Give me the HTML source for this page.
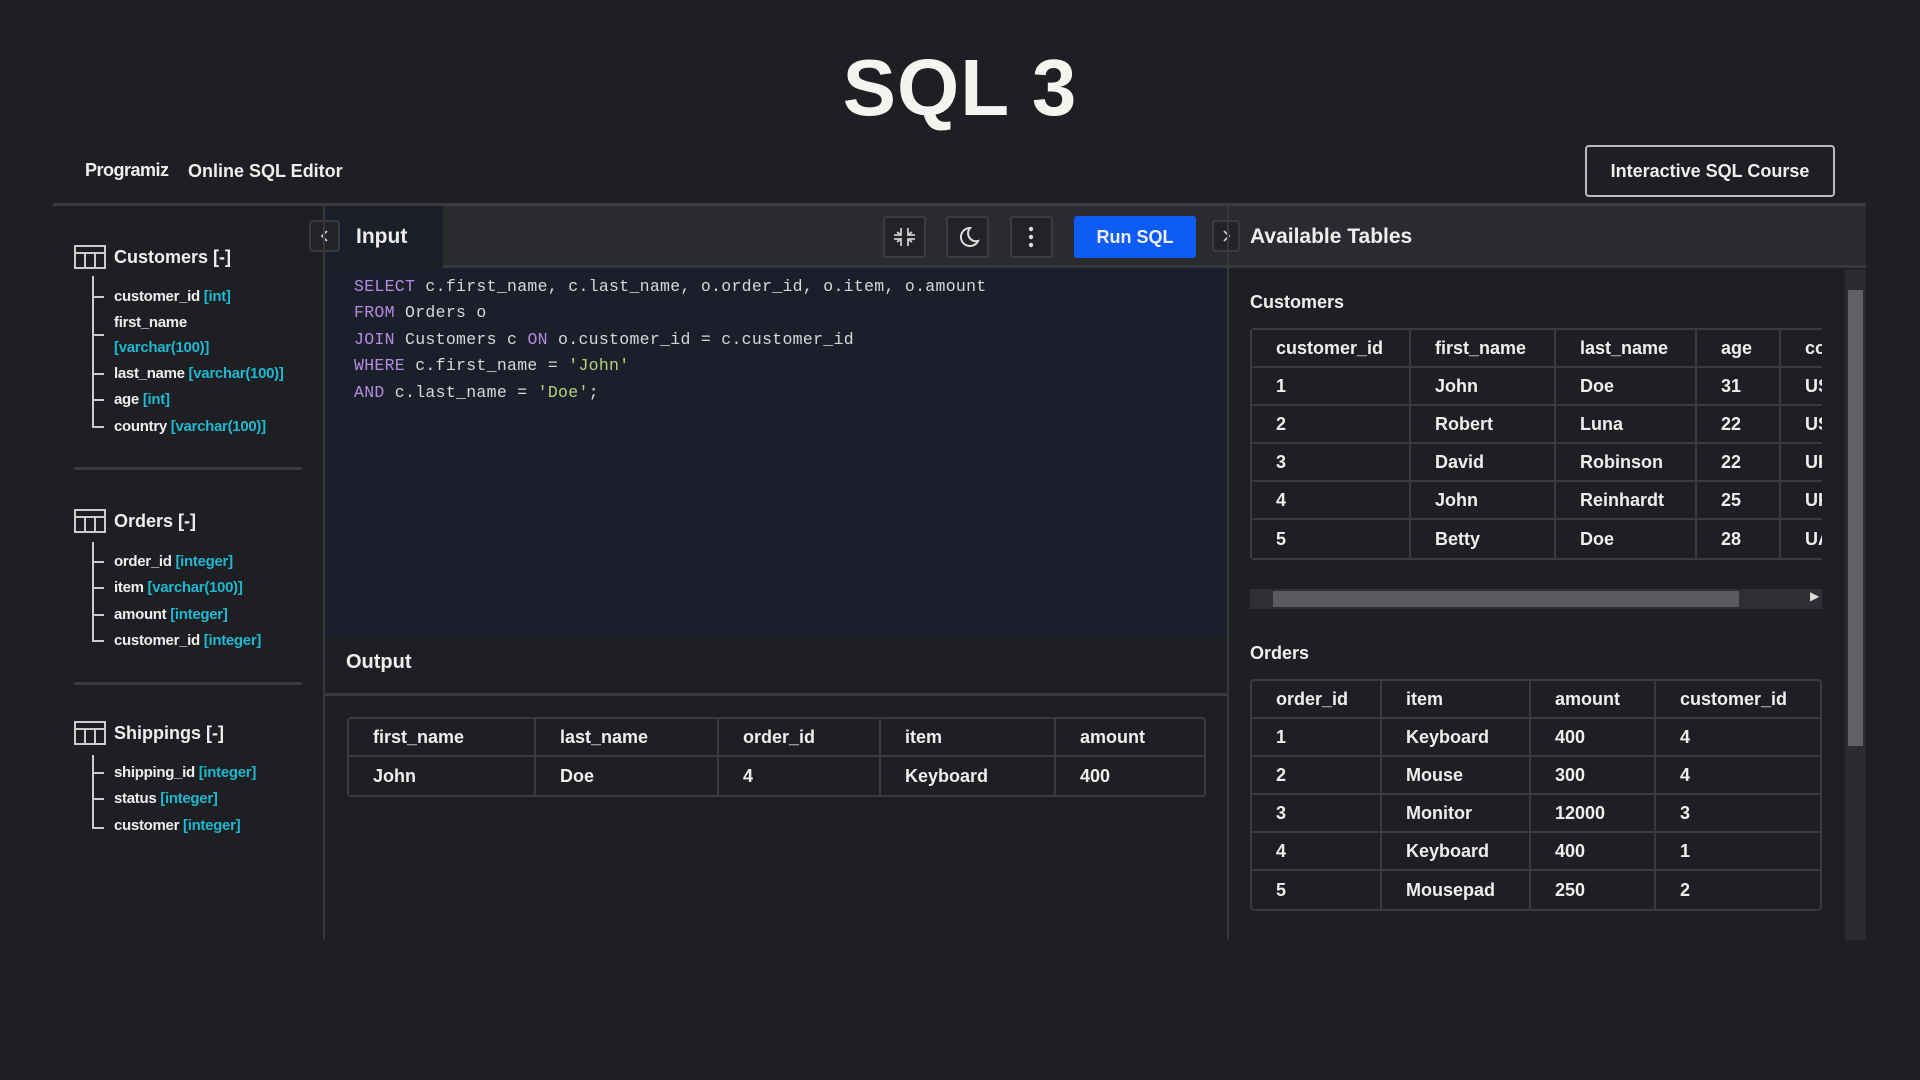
<!DOCTYPE html>
<html><head><meta charset="utf-8"><style>
*{box-sizing:border-box;margin:0;padding:0}
body{width:1920px;height:1080px;background:#1e1f22;font-family:"Liberation Sans",sans-serif;color:#eee;position:relative;overflow:hidden}
.a{position:absolute}
.title{left:0;width:1920px;top:42px;text-align:center;font-size:80px;font-weight:bold;color:#f4f4f0;letter-spacing:1px}
.btn{left:1585px;top:145px;width:250px;height:52px;border:2px solid #bbb;border-radius:4px;font-size:18px;font-weight:bold;text-align:center;line-height:48px}
.hline{background:#3a3b3f;height:3px}
.side .t{font-size:18px;font-weight:bold}
.side .i{font-size:15px;font-weight:bold;letter-spacing:-0.3px}
.c{color:#1fb7d0}
.tree{border-left:2px solid #ccc;width:14px}
.tk{position:absolute;width:12px;height:2px;background:#ccc;left:92px}
.code{font-family:"Liberation Mono",monospace;font-size:16.5px;color:#d8d8d8;line-height:26.4px;white-space:pre;letter-spacing:0.3px}
.k{color:#b58be0}.s{color:#b5d47a}
table{border-collapse:separate;border-spacing:0;border:2px solid #3a3b3f;border-radius:4px;font-size:18px;font-weight:bold}
td{border-right:2px solid #3a3b3f;border-bottom:2px solid #3a3b3f;padding:0 0 0 24px;height:38px}
tr:last-child td{border-bottom:none}
td:last-child{border-right:none}
.tb{border:2px solid #3c3d42;border-radius:3px;background:#222327;width:43px;height:42px;top:216px}
.arr{top:220px;height:32px;border:2px solid #3a3b3f;border-radius:4px;background:#222327}
</style></head><body>
<div class="a title">SQL 3</div>
<div class="a" style="left:85px;top:160px;font-size:18px;font-weight:bold;letter-spacing:-0.5px">Programiz</div>
<div class="a" style="left:188px;top:161px;font-size:18px;font-weight:bold">Online SQL Editor</div>
<div class="a btn">Interactive SQL Course</div>
<div class="a hline" style="left:53px;top:203px;width:1813px"></div>
<div class="a" style="left:324px;top:206px;width:1542px;height:62px;background:#2a2b2f;border-bottom:3px solid #36373b"></div>
<div class="a" style="left:324px;top:206px;width:119px;height:62px;background:#1c1f2a"></div>
<div class="a" style="left:356px;top:225px;font-size:21px;font-weight:bold">Input</div>
<div class="a arr" style="left:309px;width:31px"><svg width="27" height="28"><path d="M16 9l-5 5 5 5" stroke="#ccc" stroke-width="1.8" fill="none"/></svg></div>
<div class="a tb" style="left:883px"><svg width="39" height="38"><path d="M16 10v7h-7M12 14l4 3M23 10v7h7M27 14l-4 3M16 28v-7h-7M12 24l4-3M23 28v-7h7M27 24l-4-3" stroke="#ccc" stroke-width="1.8" fill="none"/></svg></div>
<div class="a tb" style="left:946px"><svg width="39" height="38"><path d="M22 10a9 9 0 1 0 8 13a8 8 0 0 1 -8 -13z" stroke="#ddd" stroke-width="2" fill="none"/></svg></div>
<div class="a tb" style="left:1010px"><svg width="39" height="38"><circle cx="19" cy="11" r="2.2" fill="#ddd"/><circle cx="19" cy="19" r="2.2" fill="#ddd"/><circle cx="19" cy="27" r="2.2" fill="#ddd"/></svg></div>
<div class="a" style="left:1074px;top:216px;width:122px;height:42px;background:#0d5cf5;border-radius:3px;text-align:center;line-height:42px;font-size:18px;font-weight:bold">Run SQL</div>
<div class="a arr" style="left:1212px;width:28px"><svg width="24" height="28"><path d="M10 9l5 5-5 5" stroke="#ccc" stroke-width="1.8" fill="none"/></svg></div>
<div class="a" style="left:1250px;top:225px;font-size:21px;font-weight:bold">Available Tables</div>
<div class="a" style="left:323px;top:206px;width:2px;height:734px;background:#36373b"></div>
<div class="a" style="left:1227px;top:206px;width:2px;height:734px;background:#36373b"></div>
<div class="a" style="left:325px;top:268px;width:902px;height:370px;background:#1b1f2b"></div>
<div class="a code" style="left:354px;top:274px"><span class="k">SELECT</span> c.first_name, c.last_name, o.order_id, o.item, o.amount
<span class="k">FROM</span> Orders o
<span class="k">JOIN</span> Customers c <span class="k">ON</span> o.customer_id = c.customer_id
<span class="k">WHERE</span> c.first_name = <span class="s">'John'</span>
<span class="k">AND</span> c.last_name = <span class="s">'Doe'</span>;</div>
<div class="a" style="left:346px;top:651px;font-size:20px;font-weight:bold">Output</div>
<div class="a hline" style="left:325px;top:693px;width:902px"></div>
<table class="a" style="left:347px;top:717px;width:859px">
<tr><td style="width:187px">first_name</td><td style="width:183px">last_name</td><td style="width:162px">order_id</td><td style="width:175px">item</td><td>amount</td></tr>
<tr><td>John</td><td>Doe</td><td>4</td><td>Keyboard</td><td>400</td></tr></table>
<div class="side">
<svg class="a" style="left:74px;top:245px" width="32" height="24"><rect x="1" y="1" width="30" height="22" fill="none" stroke="#ccc" stroke-width="2"/><path d="M1 8h30M11 8v15M21 8v15" stroke="#ccc" stroke-width="2"/></svg>
<div class="a t" style="left:114px;top:247px">Customers [-]</div>
<div class="a tree" style="left:92px;top:276px;height:152px"></div>
<div class="tk" style="top:296px"></div><div class="tk" style="top:334px"></div><div class="tk" style="top:373px"></div><div class="tk" style="top:399px"></div><div class="tk" style="top:426px"></div>
<div class="a i" style="left:114px;top:288px">customer_id <span class="c">[int]</span></div>
<div class="a i" style="left:114px;top:314px">first_name</div>
<div class="a i c" style="left:114px;top:339px">[varchar(100)]</div>
<div class="a i" style="left:114px;top:365px">last_name <span class="c">[varchar(100)]</span></div>
<div class="a i" style="left:114px;top:391px">age <span class="c">[int]</span></div>
<div class="a i" style="left:114px;top:418px">country <span class="c">[varchar(100)]</span></div>
<div class="a hline" style="left:74px;top:467px;width:228px"></div>
<svg class="a" style="left:74px;top:509px" width="32" height="24"><rect x="1" y="1" width="30" height="22" fill="none" stroke="#ccc" stroke-width="2"/><path d="M1 8h30M11 8v15M21 8v15" stroke="#ccc" stroke-width="2"/></svg>
<div class="a t" style="left:114px;top:511px">Orders [-]</div>
<div class="a tree" style="left:92px;top:542px;height:100px"></div>
<div class="tk" style="top:561px"></div><div class="tk" style="top:587px"></div><div class="tk" style="top:614px"></div><div class="tk" style="top:640px"></div>
<div class="a i" style="left:114px;top:553px">order_id <span class="c">[integer]</span></div>
<div class="a i" style="left:114px;top:579px">item <span class="c">[varchar(100)]</span></div>
<div class="a i" style="left:114px;top:606px">amount <span class="c">[integer]</span></div>
<div class="a i" style="left:114px;top:632px">customer_id <span class="c">[integer]</span></div>
<div class="a hline" style="left:74px;top:682px;width:228px"></div>
<svg class="a" style="left:74px;top:721px" width="32" height="24"><rect x="1" y="1" width="30" height="22" fill="none" stroke="#ccc" stroke-width="2"/><path d="M1 8h30M11 8v15M21 8v15" stroke="#ccc" stroke-width="2"/></svg>
<div class="a t" style="left:114px;top:723px">Shippings [-]</div>
<div class="a tree" style="left:92px;top:755px;height:74px"></div>
<div class="tk" style="top:772px"></div><div class="tk" style="top:798px"></div><div class="tk" style="top:827px"></div>
<div class="a i" style="left:114px;top:764px">shipping_id <span class="c">[integer]</span></div>
<div class="a i" style="left:114px;top:790px">status <span class="c">[integer]</span></div>
<div class="a i" style="left:114px;top:817px">customer <span class="c">[integer]</span></div>
</div>
<div class="a" style="left:1250px;top:292px;font-size:18px;font-weight:bold">Customers</div>
<div class="a" style="left:1250px;top:328px;width:572px;height:232px;overflow:hidden">
<table style="width:640px">
<tr><td style="width:159px">customer_id</td><td style="width:145px">first_name</td><td style="width:141px">last_name</td><td style="width:84px">age</td><td>country</td></tr>
<tr><td>1</td><td>John</td><td>Doe</td><td>31</td><td>USA</td></tr>
<tr><td>2</td><td>Robert</td><td>Luna</td><td>22</td><td>USA</td></tr>
<tr><td>3</td><td>David</td><td>Robinson</td><td>22</td><td>UK</td></tr>
<tr><td>4</td><td>John</td><td>Reinhardt</td><td>25</td><td>UK</td></tr>
<tr><td>5</td><td>Betty</td><td>Doe</td><td>28</td><td>UAE</td></tr></table></div>
<div class="a" style="left:1250px;top:589px;width:572px;height:20px;background:#2e2f33"></div>
<div class="a" style="left:1273px;top:591px;width:466px;height:16px;background:#5a5b5e"></div>
<div class="a" style="left:1810px;top:589px;color:#ddd;font-size:12px">▶</div>
<div class="a" style="left:1250px;top:643px;font-size:18px;font-weight:bold">Orders</div>
<table class="a" style="left:1250px;top:679px;width:572px">
<tr><td style="width:130px">order_id</td><td style="width:149px">item</td><td style="width:125px">amount</td><td>customer_id</td></tr>
<tr><td>1</td><td>Keyboard</td><td>400</td><td>4</td></tr>
<tr><td>2</td><td>Mouse</td><td>300</td><td>4</td></tr>
<tr><td>3</td><td>Monitor</td><td>12000</td><td>3</td></tr>
<tr><td>4</td><td>Keyboard</td><td>400</td><td>1</td></tr>
<tr><td>5</td><td>Mousepad</td><td>250</td><td>2</td></tr></table>
<div class="a" style="left:1845px;top:270px;width:21px;height:670px;background:#2b2c30"></div>
<div class="a" style="left:1848px;top:290px;width:15px;height:456px;background:#606164"></div>
</body></html>
